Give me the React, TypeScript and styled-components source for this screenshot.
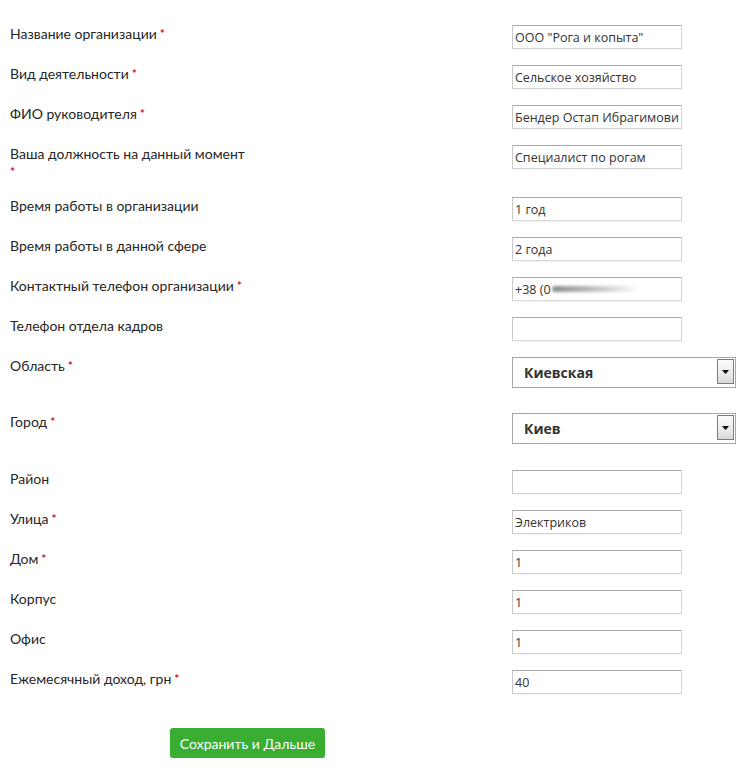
import React from "react";
import styled, { createGlobalStyle } from "styled-components";

const GlobalStyle = createGlobalStyle`
  html, body {
    margin: 0;
    padding: 0;
    background: #ffffff;
  }
  * {
    box-sizing: border-box;
  }
`;

const Form = styled.form`
  width: 755px;
  padding: 25px 0 0 10px;
  font-family: Lato, "Liberation Sans", sans-serif;
`;

const Row = styled.div<{ $gap?: number }>`
  display: grid;
  grid-template-columns: 502px 1fr;
  align-items: start;
  margin-bottom: ${(p) => p.$gap ?? 16}px;
`;

const Label = styled.label`
  width: 238px;
  font-size: 14px;
  line-height: 18px;
  color: #262626;
`;

const Required = styled.span`
  color: #c8102e;
  font-size: 12px;
  font-weight: 700;
  line-height: 14px;
  vertical-align: 1px;
`;

const Field = styled.div`
  position: relative;
  width: 170px;
`;

const TextInput = styled.input`
  display: block;
  width: 170px;
  height: 24px;
  padding: 0 2px;
  border: 1px solid #d6d6d6;
  border-top-color: #a9a9a9;
  border-left-color: #c9c9c9;
  box-shadow: 0 1px 1px rgba(0, 0, 0, 0.04);
  font-family: "Open Sans", "Liberation Sans", sans-serif;
  font-size: 12.5px;
  color: #333333;
  background: #ffffff;
  outline: none;
`;

const Smudge = styled.span`
  position: absolute;
  left: 40px;
  top: 9px;
  width: 86px;
  height: 6px;
  border-radius: 3px;
  background: linear-gradient(
    to right,
    rgba(120, 120, 120, 0.85),
    rgba(170, 170, 170, 0.6) 60%,
    rgba(200, 200, 200, 0)
  );
  filter: blur(1.5px);
`;

const SelectBox = styled.div`
  position: relative;
  width: 224px;
  height: 31px;
`;

const Select = styled.select`
  display: block;
  width: 100%;
  height: 100%;
  appearance: none;
  -webkit-appearance: none;
  border: 1px solid #a6a6a6;
  border-radius: 0;
  background: #ffffff;
  padding: 0 0 0 11px;
  font-family: "Open Sans", "Liberation Sans", sans-serif;
  font-size: 14px;
  font-weight: 700;
  color: #333333;
  outline: none;
`;

const ArrowButton = styled.span`
  position: absolute;
  right: 2px;
  top: 2px;
  width: 17px;
  height: 25px;
  border: 1px solid #7a7a7a;
  background: linear-gradient(to bottom, #fafafa 0%, #ececec 55%, #d9d9d9 100%);
  display: flex;
  align-items: center;
  justify-content: center;
  pointer-events: none;
`;

const Footer = styled.div`
  padding: 18px 0 0 160px;
`;

const SubmitButton = styled.button`
  width: 155px;
  height: 30px;
  border: none;
  border-radius: 3px;
  background: #3aad33;
  box-shadow: 0 1px 2px rgba(0, 0, 0, 0.15);
  color: #ffffff;
  font-family: Lato, "Liberation Sans", sans-serif;
  font-size: 14px;
  cursor: pointer;
`;

type InputRow = {
  label: string;
  value: string;
  required?: boolean;
  masked?: boolean;
};

const topRows: InputRow[] = [
  { label: "Название организации", value: 'ООО "Рога и копыта"', required: true },
  { label: "Вид деятельности", value: "Сельское хозяйство", required: true },
  { label: "ФИО руководителя", value: "Бендер Остап Ибрагимович", required: true },
  { label: "Ваша должность на данный момент", value: "Специалист по рогам", required: true },
  { label: "Время работы в организации", value: "1 год" },
  { label: "Время работы в данной сфере", value: "2 года" },
  { label: "Контактный телефон организации", value: "+38 (0", required: true, masked: true },
  { label: "Телефон отдела кадров", value: "" },
];

const bottomRows: InputRow[] = [
  { label: "Район", value: "" },
  { label: "Улица", value: "Электриков", required: true },
  { label: "Дом", value: "1", required: true },
  { label: "Корпус", value: "1" },
  { label: "Офис", value: "1" },
  { label: "Ежемесячный доход, грн", value: "40", required: true },
];

function FieldLabel({ text, required }: { text: string; required?: boolean }) {
  return (
    <Label>
      {text}
      {required && <Required> *</Required>}
    </Label>
  );
}

function InputLine({ row }: { row: InputRow }) {
  return (
    <Row>
      <FieldLabel text={row.label} required={row.required} />
      <Field>
        <TextInput type="text" defaultValue={row.value} />
        {row.masked && <Smudge />}
      </Field>
    </Row>
  );
}

function SelectLine({ label, value, gap }: { label: string; value: string; gap: number }) {
  return (
    <Row $gap={gap}>
      <FieldLabel text={label} required />
      <SelectBox>
        <Select defaultValue={value}>
          <option value={value}>{value}</option>
        </Select>
        <ArrowButton>
          <svg width="7" height="4" viewBox="0 0 7 4">
            <path d="M0 0h7L3.5 4z" fill="#000" />
          </svg>
        </ArrowButton>
      </SelectBox>
    </Row>
  );
}

export default function App() {
  return (
    <>
      <GlobalStyle />
      <Form onSubmit={(e) => e.preventDefault()}>
        {topRows.map((row) => (
          <InputLine key={row.label} row={row} />
        ))}
        <SelectLine label="Область" value="Киевская" gap={25} />
        <SelectLine label="Город" value="Киев" gap={26} />
        {bottomRows.map((row) => (
          <InputLine key={row.label} row={row} />
        ))}
        <Footer>
          <SubmitButton type="submit">Сохранить и Дальше</SubmitButton>
        </Footer>
      </Form>
    </>
  );
}
